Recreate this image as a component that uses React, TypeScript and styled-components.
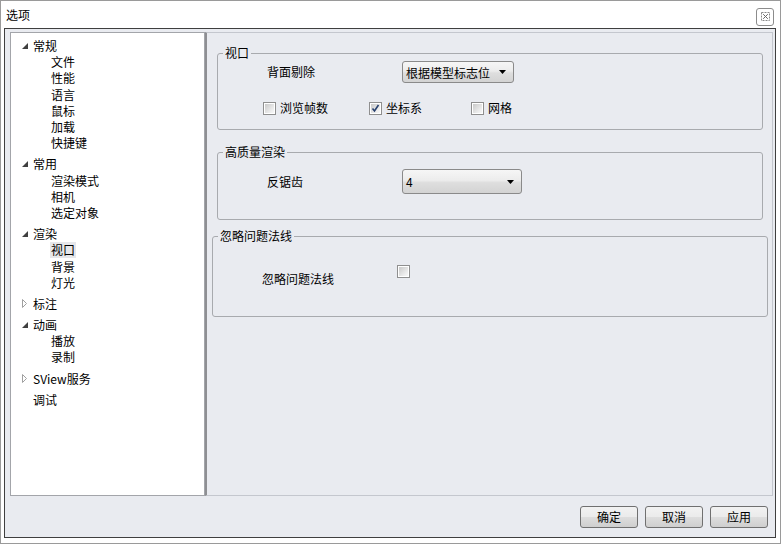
import React from 'react';
import styled, { createGlobalStyle } from 'styled-components';

const GlobalStyle = createGlobalStyle`
  html, body {
    margin: 0;
    padding: 0;
    background: #ffffff;
  }
  body {
    font-family: "Noto Sans CJK SC", "Microsoft YaHei", sans-serif;
    font-size: 12px;
    color: #000000;
  }
`;

const Window = styled.div`
  width: 781px;
  height: 544px;
  box-sizing: border-box;
  border: 1px solid #9a9a9a;
  background: #ffffff;
  display: flex;
  flex-direction: column;
`;

const TitleBar = styled.div`
  height: 27px;
  display: flex;
  align-items: center;
  justify-content: space-between;
  padding: 0 6px 0 5px;
`;

const Title = styled.span`
  line-height: 16px;
  margin-top: 1px;
`;

const CloseButton = styled.div`
  width: 18px;
  height: 18px;
  box-sizing: border-box;
  margin-top: 4px;
  border: 1px solid #8c8c8c;
  border-radius: 3px;
  background: #ffffff;
  display: flex;
  align-items: center;
  justify-content: center;
`;

const Frame = styled.div`
  flex: 1;
  margin: 0 4px 5px 3px;
  border: 1px solid #3f3f3f;
  background: #e9ebf0;
  display: flex;
  flex-direction: column;
`;

const Body = styled.div`
  display: flex;
  padding: 3px 2px 0 5px;
`;

const Tree = styled.div`
  width: 195px;
  height: 464px;
  box-sizing: border-box;
  background: #ffffff;
  border: 1px solid #a3a5aa;
  padding-top: 5px;
`;

const TreeGroup = styled.div`
  & + & {
    margin-top: 5px;
  }
`;

const TreeRow = styled.div<{ $child?: boolean }>`
  height: 16.2px;
  display: flex;
  align-items: center;
  padding-left: ${(p) => (p.$child ? '39px' : '7px')};
  white-space: nowrap;
`;

const Expander = styled.span`
  width: 14px;
  height: 16px;
  display: flex;
  align-items: center;
  padding-left: 4px;
  box-sizing: border-box;
`;

const NodeText = styled.span<{ $selected?: boolean }>`
  line-height: 16px;
  padding: 0 1px;
  background: ${(p) => (p.$selected ? '#e6e7ea' : 'transparent')};
`;

const Panel = styled.div`
  width: 568px;
  height: 464px;
  box-sizing: border-box;
  border: 1px solid #c4c7ce;
  border-left: 2px solid #8e8f93;
  padding: 12px 7px 0 10px;
  display: flex;
  flex-direction: column;
`;

const Group = styled.fieldset<{ $gap: number; $pad: number; $shift?: number }>`
  margin: ${(p) => p.$gap}px ${(p) => -(p.$shift ?? 0) + 2}px 0 ${(p) => -(p.$shift ?? 0)}px;
  padding: 0 0 ${(p) => p.$pad}px 0;
  border: 1px solid #a8aaae;
  border-radius: 3px;
  min-width: 0;
`;

const Legend = styled.legend`
  margin-left: 5px;
  padding: 0 2px;
  line-height: 16px;
  font-size: 12px;
`;

const FieldRow = styled.div<{ $top: number; $align?: string }>`
  display: flex;
  align-items: ${(p) => p.$align ?? 'center'};
  margin-top: ${(p) => p.$top}px;
  padding-left: 49px;
`;

const FieldLabel = styled.span<{ $top?: number }>`
  width: 135px;
  line-height: 16px;
  margin-top: ${(p) => p.$top ?? 0}px;
`;

const Combo = styled.div<{ $w: number; $h: number }>`
  width: ${(p) => p.$w}px;
  height: ${(p) => p.$h}px;
  box-sizing: border-box;
  border: 1px solid #8a8a8a;
  border-radius: 3px;
  background: linear-gradient(#f6f6f6, #ececec 45%, #dedede 55%, #d3d3d3);
  display: flex;
  align-items: center;
  justify-content: space-between;
  padding: 0 7px 0 3px;
`;

const CheckRow = styled.div`
  display: flex;
  align-items: center;
  margin-top: 17px;
  height: 16px;
  padding-left: 45px;
`;

const CheckItem = styled.label<{ $w: number }>`
  width: ${(p) => p.$w}px;
  display: flex;
  align-items: center;
  gap: 4px;
  line-height: 16px;
`;

const Box = styled.span<{ $top?: number }>`
  width: 13px;
  height: 13px;
  box-sizing: border-box;
  border: 1px solid #8f8f8f;
  background: #ffffff;
  margin-top: ${(p) => p.$top ?? 0}px;
  display: flex;
  align-items: center;
  justify-content: center;
  flex-shrink: 0;
  > i {
    width: 9px;
    height: 9px;
    background: linear-gradient(135deg, #c9c9c9, #ececec 70%, #f8f8f8);
    display: flex;
    align-items: center;
    justify-content: center;
  }
`;

const Footer = styled.div`
  flex: 1;
  display: flex;
  justify-content: flex-end;
  align-items: flex-start;
  gap: 7px;
  padding: 10px 7px 0 0;
`;

const Button = styled.div`
  width: 58px;
  height: 22px;
  box-sizing: border-box;
  border: 1px solid #707070;
  border-radius: 3px;
  background: linear-gradient(#f2f2f2, #ebebeb 48%, #dddddd 52%, #cfcfcf);
  display: flex;
  align-items: center;
  justify-content: center;
  line-height: 16px;
`;

const Expanded = () => (
  <svg width="6" height="6" viewBox="0 0 6 6">
    <polygon points="6,0 6,6 0,6" fill="#404040" />
  </svg>
);

const Collapsed = () => (
  <svg width="5" height="9" viewBox="0 0 5 9">
    <polygon points="0.5,0.5 4.5,4.5 0.5,8.5" fill="none" stroke="#a0a0a0" strokeWidth="1" />
  </svg>
);

const Arrow = () => (
  <svg width="7" height="4" viewBox="0 0 7 4">
    <polygon points="0,0 7,0 3.5,4" fill="#000" />
  </svg>
);

const CloseIcon = () => (
  <svg width="9" height="9" viewBox="0 0 9 9">
    <rect x="0.5" y="0.5" width="8" height="8" fill="none" stroke="#8a8a8a" strokeDasharray="2 1" />
    <path d="M2.2 2.2 L6.8 6.8 M6.8 2.2 L2.2 6.8" stroke="#666" strokeWidth="1" />
  </svg>
);

const Check = ({ checked, top }: { checked?: boolean; top?: number }) => (
  <Box $top={top}>
    <i>
      {checked && (
        <svg width="9" height="9" viewBox="0 0 9 9">
          <path d="M1.5 4.5 L3.5 7 L7.5 1" fill="none" stroke="#27406e" strokeWidth="1.6" />
        </svg>
      )}
    </i>
  </Box>
);

type Node = { label: string; open?: boolean; children?: string[] };

const tree: Node[] = [
  { label: '常规', open: true, children: ['文件', '性能', '语言', '鼠标', '加载', '快捷键'] },
  { label: '常用', open: true, children: ['渲染模式', '相机', '选定对象'] },
  { label: '渲染', open: true, children: ['视口', '背景', '灯光'] },
  { label: '标注', open: false },
  { label: '动画', open: true, children: ['播放', '录制'] },
  { label: 'SView服务', open: false },
  { label: '调试' },
];

export default function App() {
  return (
    <>
      <GlobalStyle />
      <Window>
        <TitleBar>
          <Title>选项</Title>
          <CloseButton>
            <CloseIcon />
          </CloseButton>
        </TitleBar>
        <Frame>
          <Body>
            <Tree>
              {tree.map((n) => (
                <TreeGroup key={n.label}>
                  <TreeRow>
                    <Expander>
                      {n.open === true && <Expanded />}
                      {n.open === false && <Collapsed />}
                    </Expander>
                    <NodeText>{n.label}</NodeText>
                  </TreeRow>
                  {n.children?.map((c) => (
                    <TreeRow $child key={c}>
                      <NodeText $selected={c === '视口'}>{c}</NodeText>
                    </TreeRow>
                  ))}
                </TreeGroup>
              ))}
            </Tree>
            <Panel>
              <Group $gap={0} $pad={13}>
                <Legend>视口</Legend>
                <FieldRow $top={0}>
                  <FieldLabel>背面剔除</FieldLabel>
                  <Combo $w={112} $h={22}>
                    <span>根据模型标志位</span>
                    <Arrow />
                  </Combo>
                </FieldRow>
                <CheckRow>
                  <CheckItem $w={106}>
                    <Check />
                    浏览帧数
                  </CheckItem>
                  <CheckItem $w={102}>
                    <Check checked />
                    坐标系
                  </CheckItem>
                  <CheckItem $w={80}>
                    <Check />
                    网格
                  </CheckItem>
                </CheckRow>
              </Group>
              <Group $gap={14} $pad={25}>
                <Legend>高质量渲染</Legend>
                <FieldRow $top={9}>
                  <FieldLabel>反锯齿</FieldLabel>
                  <Combo $w={120} $h={25}>
                    <span>4</span>
                    <Arrow />
                  </Combo>
                </FieldRow>
              </Group>
              <Group $gap={8} $pad={29} $shift={5}>
                <Legend>忽略问题法线</Legend>
                <FieldRow $top={0} $align="flex-start">
                  <FieldLabel $top={27}>忽略问题法线</FieldLabel>
                  <Check top={21} />
                </FieldRow>
              </Group>
            </Panel>
          </Body>
          <Footer>
            <Button>确定</Button>
            <Button>取消</Button>
            <Button>应用</Button>
          </Footer>
        </Frame>
      </Window>
    </>
  );
}
